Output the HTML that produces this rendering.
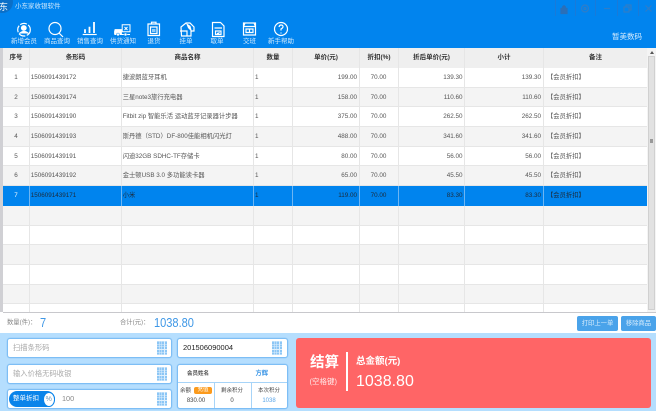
<!DOCTYPE html>
<html lang="zh"><head><meta charset="utf-8"><style>
*{box-sizing:border-box;margin:0;padding:0}
html,body{width:656px;height:411px;overflow:hidden;background:#fff;font-family:"Liberation Sans","Noto Sans CJK SC",sans-serif}
#wrap{position:absolute;left:0;top:0;width:656px;height:411px;filter:blur(.3px)}
.a{position:absolute}
#top{left:0;top:0;width:656px;height:48px;background:#0184ee}
.nav{position:absolute;top:38px;width:40px;text-align:center;font-size:6.5px;line-height:8px;color:#cfe8fc}
svg{position:absolute;overflow:visible}
.r{position:absolute;left:3px;width:644px;height:19.67px;border-bottom:1px solid #e6e6e6;font-size:6.3px;color:#555}
.r.o{background:#fff}.r.e{background:#f4f4f4}.r.s{background:#0084ee;color:#1c2b3a}
.r b{position:absolute;top:0;font-weight:normal;line-height:19.500px;white-space:nowrap;overflow:hidden}
.c0{left:0;width:26px;text-align:center}.c1{left:27.700px;width:90px}.c2{left:119.700px;width:130px}.c3{left:252px;width:30px}
.c4{left:289px;width:65px;text-align:right}.c5{left:356px;width:39px;text-align:center}
.c6{left:395px;width:64.500px;text-align:right}.c7{left:461px;width:77px;text-align:right}.c8{left:544px;width:90px}
.cl{position:absolute;top:48px;width:1px;height:264px;background:#e6e6e6}
.hd{position:absolute;top:48px;height:20px;line-height:19px;text-align:center;font-size:6.5px;font-weight:bold;color:#333;background:#efefef}
.inp{position:absolute;background:#fff;border:1px solid #7dbef5;border-radius:3px;font-size:7.300px;color:#aaa;padding-left:5px;box-shadow:0 0 0 .5px #9dcff8}
.grid{position:absolute;width:10px;height:14px;background:repeating-linear-gradient(90deg,#8cc6f5 0 2px,#dff0fd 2px 2.600px)}
.grid:after{content:"";position:absolute;inset:0;background:repeating-linear-gradient(0deg,#dff0fd 0 .6px,transparent .6px 2.600px)}
.btn{position:absolute;top:316px;height:15px;background:#4aa3ea;border-radius:2px;color:#d8edfd;font-size:6.3px;line-height:15px;text-align:center}
.sel{position:absolute;top:186px;width:1px;height:20px;background:#6db5f2}
.sep{position:absolute;top:0;width:1px;height:16px;background:#1a7ad8}
</style></head><body><div id="wrap">
<div class="a" id="top"></div>
<div class="a" style="left:-8px;top:-9px;width:21px;height:22px;border-radius:50%;background:#0a6fc8"></div>
<div class="a" style="left:-1px;top:1px;font-size:9px;color:#fff;line-height:12px;width:9px;overflow:hidden">东</div>
<div class="a" style="left:15px;top:3px;font-size:6.5px;line-height:8px;color:#cfe8fc">小东家收银软件</div>
<div class="sep" style="left:555px"></div><div class="sep" style="left:575px"></div><div class="sep" style="left:595px"></div><div class="sep" style="left:617px"></div><div class="sep" style="left:638px"></div>

<svg style="left:0;top:0" width="656" height="48" fill="none" stroke="#fff" stroke-width="1.2">
<circle cx="24" cy="29.700" r="6.300" stroke-dasharray="7 1.500"/><circle cx="23.800" cy="28" r="2.300" fill="#fff"/><path d="M19.500 33.500q4.500-4 9 0" fill="#fff"/>
<circle cx="55" cy="28.500" r="6"/><path d="M59 33l4 4"/>
<path d="M82.700 34.500h14" stroke-width="1.200"/><path d="M85 33v-3.700M89.500 33v-6.300M94 33V22" stroke-width="1.800"/>
<path d="M122.200 24.800h7.800v7h-7.800zM124.500 27l3 3M127.500 27l-3 3" stroke-width="1"/><path d="M115 29.500h6.500v4.500h-7v-2.500z" fill="#fff" stroke-width=".8"/><path d="M114.500 34.500h15.500" stroke-width="1"/><circle cx="118" cy="34.500" r="1.500" fill="#fff" stroke="#0184ee" stroke-width=".5"/><circle cx="125.500" cy="34.500" r="1.500" fill="#fff" stroke="#0184ee" stroke-width=".5"/>
<path d="M148 24h11.500v11.500H148zM151.500 24v-1.800h4.500V24M150.500 27h6.500v6.500h-6.500z"/><path d="M152 29h3.500v3H152z" fill="#8fcbf8" stroke="none"/>
<path d="M181 27l5-4h4l4 4v4h-3v5h-9.500z"/><path d="M186 23l2 5 4 4-1.500-6" fill="#fff" stroke="none"/><path d="M180 31h7v5"/>
<path d="M212.500 22.500h8l3.500 3.500v10.500h-11.500zM214.500 28h7.500M215.500 31h5.500v3.500h-5.500zM217 33l1 .8 1.500-1.500"/>
<path d="M243.500 23h12v12h-12zM243.500 26.500h12M245 23l-1.500 3.500M254 23l1.500 3.500M246 29h7v3.500h-7zM249.500 29v3.500"/>
<circle cx="281" cy="29" r="6.500"/><path d="M279 27q.5-2 2-2 2.200 0 2 2-.2 1-2 2v1.500M281 32.500v1"/>
<path d="M561 8.500h6v5h-6zM562.500 8.500V7q1.500-2.500 3 0v1.500" stroke="#2a6fb8" fill="#2a6fb8"/>
<circle cx="585" cy="8.500" r="3.500" stroke="#2f7dc8"/><circle cx="585" cy="8.500" r="1" stroke="#2f7dc8"/>
<path d="M604 8.500h6" stroke="#2f7dc8"/>
<path d="M624 7h5v5h-5zM626 7V5h5v5h-2" stroke="#2f7dc8"/>
<path d="M645.500 5.500l6 6M651.500 5.500l-6 6" stroke="#2f7dc8"/>
</svg>
<div class="nav" style="left:4px">新增会员</div><div class="nav" style="left:37px">商品查询</div><div class="nav" style="left:70px">销售查询</div><div class="nav" style="left:103px">供货通知</div><div class="nav" style="left:134px">退货</div><div class="nav" style="left:166px">挂单</div><div class="nav" style="left:197px">取单</div><div class="nav" style="left:229.500px">交班</div><div class="nav" style="left:261px">新手帮助</div>
<div class="a" style="left:612px;top:31px;font-size:7.500px;line-height:11px;color:#d5ebfd">暂美数码</div>

<div class="a" style="left:0;top:48px;width:3px;height:264px;background:#d0d0d4"></div>
<div class="a" style="left:3px;top:48px;width:653px;height:20px;background:#efefef"></div>
<div class="hd" style="left:3px;width:26px">序号</div><div class="hd" style="left:30px;width:91px">条形码</div><div class="hd" style="left:122px;width:131px">商品名称</div><div class="hd" style="left:254px;width:38px">数量</div><div class="hd" style="left:293px;width:66px">单价(元)</div><div class="hd" style="left:360px;width:38px">折扣(%)</div><div class="hd" style="left:399px;width:65px">折后单价(元)</div><div class="hd" style="left:465px;width:78px">小计</div><div class="hd" style="left:544px;width:103px">备注</div>

<div class="r o" style="top:68px"><b class="c0">1</b><b class="c1">1506091439172</b><b class="c2">捷波朗蓝牙耳机</b><b class="c3">1</b><b class="c4">199.00</b><b class="c5">70.00</b><b class="c6">139.30</b><b class="c7">139.30</b><b class="c8">【会员折扣】</b></div>
<div class="r e" style="top:87.67px"><b class="c0">2</b><b class="c1">1506091439174</b><b class="c2">三星note3旅行充电器</b><b class="c3">1</b><b class="c4">158.00</b><b class="c5">70.00</b><b class="c6">110.60</b><b class="c7">110.60</b><b class="c8">【会员折扣】</b></div>
<div class="r o" style="top:107.33px"><b class="c0">3</b><b class="c1">1506091439190</b><b class="c2">Fitbit zip 智能乐活 运动蓝牙记录器计步器</b><b class="c3">1</b><b class="c4">375.00</b><b class="c5">70.00</b><b class="c6">262.50</b><b class="c7">262.50</b><b class="c8">【会员折扣】</b></div>
<div class="r e" style="top:127px"><b class="c0">4</b><b class="c1">1506091439193</b><b class="c2">斯丹德（STD）DF-800佳能相机闪光灯</b><b class="c3">1</b><b class="c4">488.00</b><b class="c5">70.00</b><b class="c6">341.60</b><b class="c7">341.60</b><b class="c8">【会员折扣】</b></div>
<div class="r o" style="top:146.67px"><b class="c0">5</b><b class="c1">1506091439191</b><b class="c2">闪迪32GB SDHC-TF存储卡</b><b class="c3">1</b><b class="c4">80.00</b><b class="c5">70.00</b><b class="c6">56.00</b><b class="c7">56.00</b><b class="c8">【会员折扣】</b></div>
<div class="r e" style="top:166.33px"><b class="c0">6</b><b class="c1">1506091439192</b><b class="c2">金士顿USB 3.0 多功能读卡器</b><b class="c3">1</b><b class="c4">65.00</b><b class="c5">70.00</b><b class="c6">45.50</b><b class="c7">45.50</b><b class="c8">【会员折扣】</b></div>
<div class="r e" style="top:206px"></div><div class="r o" style="top:225.67px"></div><div class="r e" style="top:245.33px"></div><div class="r o" style="top:265px"></div><div class="r e" style="top:284.67px"></div><div class="r o" style="top:304.33px;height:8px;border:0"></div>
<div class="cl" style="left:29px"></div><div class="cl" style="left:121px"></div><div class="cl" style="left:253px"></div><div class="cl" style="left:292px"></div><div class="cl" style="left:359px"></div><div class="cl" style="left:398px"></div><div class="cl" style="left:464px"></div><div class="cl" style="left:543px"></div>
<div class="r s" style="top:186px;height:19.500px;border:0"><b class="c0" style="color:#fff">7</b><b class="c1">1506091439171</b><b class="c2">小米</b><b class="c3">1</b><b class="c4">119.00</b><b class="c5">70.00</b><b class="c6">83.30</b><b class="c7">83.30</b><b class="c8">【会员折扣】</b></div>
<div class="sel" style="left:29px"></div><div class="sel" style="left:121px"></div><div class="sel" style="left:253px"></div><div class="sel" style="left:292px"></div><div class="sel" style="left:359px"></div><div class="sel" style="left:398px"></div><div class="sel" style="left:464px"></div><div class="sel" style="left:543px"></div>
<div class="a" style="left:647px;top:48px;width:9px;height:264px;background:#f4f4f4"></div>
<div class="a" style="left:648px;top:56px;width:7px;height:254px;background:#e2e2e2;border:1px solid #d0d0d0"></div>
<div class="a" style="left:650px;top:139px;width:3px;height:4px;background:#999"></div>
<div class="a" style="left:650px;top:51px;width:0;height:0;border:2px solid transparent;border-bottom:3px solid #555;border-top:0"></div>
<div class="a" style="left:3px;top:312px;width:653px;height:1px;background:#c8c8cc"></div>

<div class="a" style="left:7px;top:318px;font-size:6.3px;line-height:10px;color:#888">数量(件)：</div>
<div class="a" style="left:40px;top:315px;font-size:13px;line-height:15px;color:#3e97e6;transform:scaleX(.85);transform-origin:0 0">7</div>
<div class="a" style="left:120px;top:318px;font-size:6.3px;line-height:10px;color:#888">合计(元)：</div>
<div class="a" style="left:154px;top:315px;font-size:13px;line-height:15px;color:#3e97e6;transform:scaleX(.85);transform-origin:0 0">1038.80</div>
<div class="btn" style="left:577px;width:41px">打印上一单</div><div class="btn" style="left:621px;width:35px">移除商品</div>

<div class="a" style="left:0;top:333px;width:656px;height:78px;background:#b5defe"></div>
<div class="inp" style="left:7px;top:338px;width:165px;height:20px;line-height:18px">扫描条形码</div><div class="grid" style="left:157px;top:341px"></div>
<div class="inp" style="left:7px;top:363.500px;width:165px;height:20px;line-height:18px">输入价格无码收银</div><div class="grid" style="left:157px;top:367px"></div>
<div class="inp" style="left:7px;top:389px;width:165px;height:20px;line-height:18px;padding-left:54px;color:#888">100</div><div class="grid" style="left:157px;top:392px"></div>
<div class="a" style="left:9px;top:391px;width:46px;height:16px;border-radius:8px;background:#0a84ea;color:#fff;font-size:6.5px;line-height:16px;padding-left:4px;white-space:nowrap">整单折扣</div>
<div class="a" style="left:42.500px;top:391.500px;width:12.500px;height:15px;border-radius:50%;background:#fff;border:1px solid #0a84ea;color:#6a97bd;font-size:7px;line-height:13px;text-align:center">%</div>
<div class="inp" style="left:177px;top:338px;width:110.500px;height:20px;line-height:18px;color:#222;font-size:7.500px">201506090004</div><div class="grid" style="left:272px;top:341px"></div>
<div class="inp" style="left:177px;top:363.500px;width:110.500px;height:45.500px;padding:0"></div>
<div class="a" style="left:178px;top:382px;width:109px;height:1px;background:#a7d4f8"></div>
<div class="a" style="left:214px;top:383px;width:1px;height:25px;background:#a7d4f8"></div><div class="a" style="left:250.500px;top:383px;width:1px;height:25px;background:#a7d4f8"></div>
<div class="a" style="left:187px;top:369.500px;font-size:5.500px;line-height:9px;color:#555;font-weight:bold">会员姓名</div>
<div class="a" style="left:255.500px;top:369px;font-size:6.300px;line-height:10px;color:#3e97e6;font-weight:bold">方辉</div>
<div class="a" style="left:180px;top:386.500px;font-size:5.500px;line-height:8px;color:#444">余额</div>
<div class="a" style="left:194px;top:386.500px;width:18px;height:7.500px;border-radius:2px;background:#fb9a1c;color:#fff;font-size:5.500px;line-height:7.500px;text-align:center">充值</div>
<div class="a" style="left:178px;top:397px;width:36px;text-align:center;font-size:6px;line-height:8px;color:#444">830.00</div>
<div class="a" style="left:214.500px;top:386.500px;width:35px;text-align:center;font-size:5.500px;line-height:8px;color:#444">剩余积分</div>
<div class="a" style="left:214.500px;top:397px;width:35px;text-align:center;font-size:6px;line-height:8px;color:#444">0</div>
<div class="a" style="left:251px;top:386.500px;width:36px;text-align:center;font-size:5.500px;line-height:8px;color:#444">本次积分</div>
<div class="a" style="left:251px;top:397px;width:36px;text-align:center;font-size:6px;line-height:8px;color:#5aa5e8">1038</div>

<div class="a" style="left:296px;top:338px;width:355px;height:70px;border-radius:3px;background:#ff6566"></div>
<div class="a" style="left:310px;top:353px;font-size:14.500px;line-height:20px;color:#fff;font-weight:bold">结算</div>
<div class="a" style="left:309.500px;top:377px;font-size:7.500px;line-height:10px;color:#ffeaea;white-space:nowrap">(空格键)</div>
<div class="a" style="left:346px;top:352px;width:1.500px;height:39px;background:#fff"></div>
<div class="a" style="left:356px;top:355.500px;font-size:9.500px;line-height:12px;color:#fff;font-weight:bold;white-space:nowrap">总金额(元)</div>
<div class="a" style="left:356px;top:372px;font-size:16px;line-height:19px;color:#fff">1038.80</div>
</div></body></html>
